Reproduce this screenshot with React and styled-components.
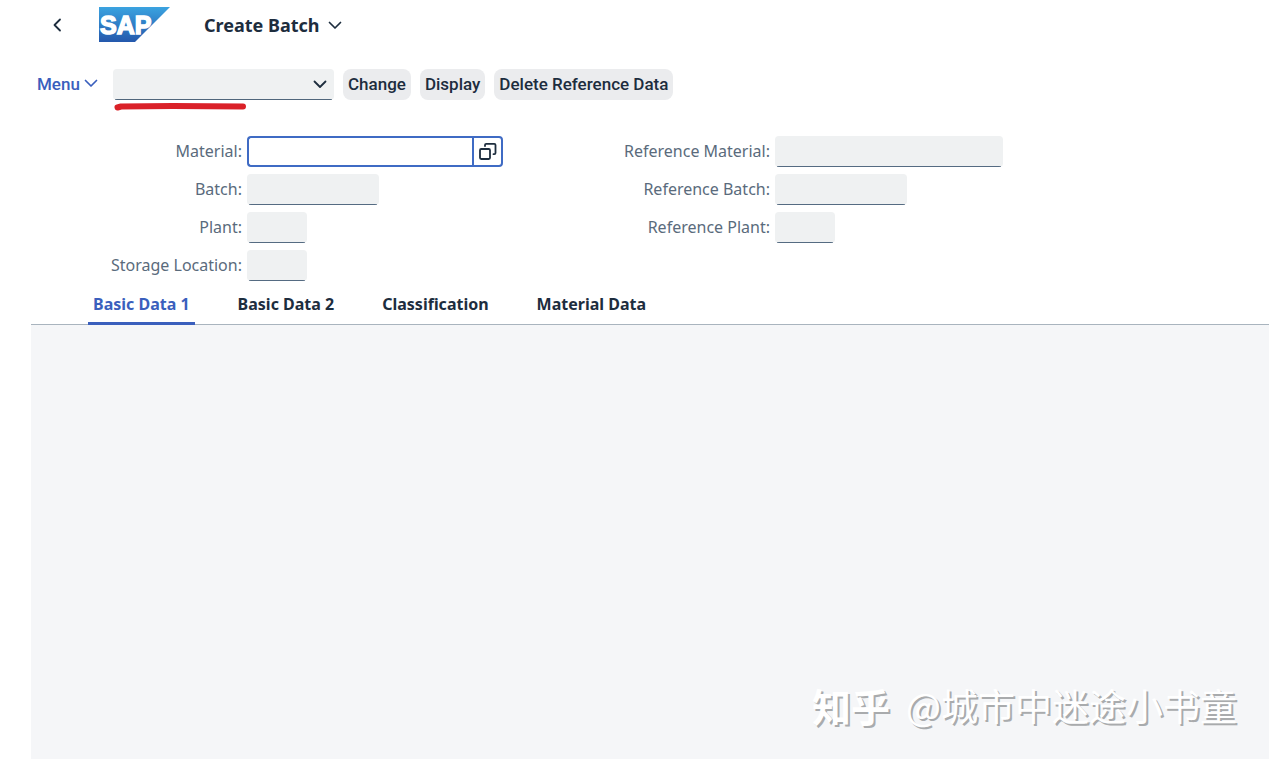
import React from "react";
import styled, { createGlobalStyle } from "styled-components";

const Global = createGlobalStyle`
  *, *::before, *::after { box-sizing: border-box; }
  html, body, #root { height: 100%; }
  body {
    margin: 0;
    background: #fff;
    color: #1d2d3e;
    font: 16px/20px "Noto Sans", "Liberation Sans", sans-serif;
  }
  button, input, select { font: inherit; color: inherit; margin: 0; }
`;

const Page = styled.div`
  display: flex;
  flex-direction: column;
  min-height: 100%;
  padding-left: 31px;
`;

const ShellBar = styled.header`
  display: flex;
  align-items: center;
  height: 50px;
  padding-left: 16px;
`;

const PlainButton = styled.button`
  display: flex;
  align-items: center;
  justify-content: center;
  gap: 4px;
  padding: 0;
  border: 0;
  background: none;
  cursor: pointer;
`;

const BackButton = styled(PlainButton)`
  width: 20px;
  height: 32px;
`;

const Logo = styled.svg`
  width: 72px;
  height: 36px;
  margin-left: 32px;
`;

const Title = styled.h1`
  margin: 0 0 0 33px;
  font-size: 18px;
  line-height: 24px;
  font-weight: 700;
`;

const TitleButton = styled(PlainButton)`
  gap: 8px;
`;

const Toolbar = styled.div`
  display: flex;
  align-items: center;
  gap: 9px;
  height: 31px;
  margin-top: 19px;
  padding-left: 6px;
  font: 500 17px/20px Roboto, "Liberation Sans", sans-serif;
`;

const MenuButton = styled(PlainButton)`
  width: 61px;
  height: 31px;
  margin-right: 6px;
  padding-bottom: 2px;
  justify-content: space-between;
  color: #3a5fbd;
`;

const CommandBox = styled.div`
  position: relative;
  width: 221px;
  height: 31px;
`;

const CommandSelect = styled.select`
  appearance: none;
  width: 100%;
  height: 100%;
  padding: 0 32px 0 8px;
  border: 0;
  border-radius: 4px;
  background: linear-gradient(#50667c, #50667c) center bottom / calc(100% - 4px) 1px no-repeat #eff1f2;
`;

const SelectArrow = styled.svg`
  position: absolute;
  right: 7px;
  top: 11px;
  pointer-events: none;
`;

const RedMark = styled.svg`
  position: absolute;
  left: 0;
  top: 32px;
  pointer-events: none;
`;

const ActionButton = styled(PlainButton)`
  height: 31px;
  padding: 0 5px 2px;
  border-radius: 8px;
  background: #ebecee;
`;

const Form = styled.form`
  display: grid;
  grid-template-columns: 528px 1fr;
  margin-top: 36px;
`;

const FieldColumn = styled.div`
  display: grid;
  grid-template-columns: 211px 1fr;
  grid-auto-rows: 31px;
  gap: 7px 5px;
  align-content: start;
`;

const Label = styled.label`
  padding-top: 5px;
  text-align: right;
  color: #5a6b7c;
`;

const Field = styled.input`
  width: ${(p) => p.$width}px;
  height: 31px;
  padding: 0 8px;
  border: 0;
  border-radius: 4px;
  background: linear-gradient(#556b82, #556b82) center bottom / calc(100% - 4px) 1px no-repeat #eff1f2;
`;

const HelpField = styled.div`
  display: flex;
`;

const FocusedField = styled.input`
  width: 225px;
  height: 31px;
  padding: 0 8px;
  border: 2px solid #3f6bc4;
  border-right-width: 0;
  border-radius: 4px 0 0 4px;
  background: #fff;
  outline: none;
`;

const HelpButton = styled(PlainButton)`
  width: 31px;
  height: 31px;
  border: 2px solid #3f6bc4;
  border-radius: 0 4px 4px 0;
`;

const Tabs = styled.nav`
  display: flex;
  gap: 38px;
  margin-top: 4px;
  padding-left: 57px;
  border-bottom: 1px solid #a9b4be;
`;

const Tab = styled.button`
  height: 40px;
  margin-bottom: -1px;
  padding: 0 5px;
  border: 0;
  border-bottom: 3px solid ${(p) => (p.$active ? "#3a5fbd" : "transparent")};
  background: none;
  color: ${(p) => (p.$active ? "#3a5fbd" : "#1d2d3e")};
  font-weight: 700;
  cursor: pointer;
`;

const Panel = styled.main`
  display: flex;
  flex: 1;
  align-items: flex-end;
  justify-content: flex-end;
  padding: 0 32px 27px 0;
  background: #f5f6f8;
`;

const Watermark = styled.div`
  display: flex;
  gap: 16px;
  color: #fff;
  font: 37px/54px "Noto Sans CJK SC", sans-serif;
  text-shadow: 2px 2px 0 #a9abad;
`;

const WatermarkBrand = styled.span`
  font-size: 39px;
  font-weight: 700;
`;

function Chevron() {
  return (
    <svg width="14" height="9" viewBox="0 0 14 9" fill="none" stroke="currentColor" strokeWidth="1.7" strokeLinecap="round" strokeLinejoin="round" aria-hidden="true">
      <path d="M1.5 1.5 7 7l5.5-5.5" />
    </svg>
  );
}

function SapLogo() {
  return (
    <Logo viewBox="0 0 72 36" role="img" aria-label="SAP">
      <defs>
        <linearGradient id="sapBlue" x1="0" y1="0" x2="0" y2="1">
          <stop offset="0" stopColor="#3ba3e0" />
          <stop offset="1" stopColor="#2458ac" />
        </linearGradient>
      </defs>
      <path d="M0 0h71L36 35H0z" fill="url(#sapBlue)" />
      <text x="1" y="27" fill="#fff" stroke="#fff" strokeWidth="1.5" fontFamily="Liberation Sans, sans-serif" fontWeight="700" fontSize="25">
        SAP
      </text>
    </Logo>
  );
}

function FieldRow({ id, label, width }) {
  return (
    <>
      <Label htmlFor={id}>{label}:</Label>
      <Field id={id} $width={width} />
    </>
  );
}

const tabs = ["Basic Data 1", "Basic Data 2", "Classification", "Material Data"];

export default function App() {
  const [active, setActive] = React.useState(0);
  return (
    <>
      <Global />
      <Page>
        <ShellBar>
          <BackButton aria-label="Back">
            <svg width="9" height="14" viewBox="0 0 9 14" fill="none" stroke="currentColor" strokeWidth="1.8" strokeLinecap="round" strokeLinejoin="round">
              <path d="M7 1.500 1.500 7 7 12.500" />
            </svg>
          </BackButton>
          <SapLogo />
          <Title>
            <TitleButton>
              Create Batch
              <Chevron />
            </TitleButton>
          </Title>
        </ShellBar>
        <Toolbar>
          <MenuButton>
            Menu
            <Chevron />
          </MenuButton>
          <CommandBox>
            <CommandSelect aria-label="Command">
              <option value="" />
            </CommandSelect>
            <SelectArrow width="14" height="9" viewBox="0 0 14 9" fill="none" stroke="currentColor" strokeWidth="1.8" strokeLinecap="round" strokeLinejoin="round">
              <path d="M1.5 1.5 7 7l5.5-5.5" />
            </SelectArrow>
            <RedMark width="136" height="12" viewBox="0 0 136 12" fill="none" stroke="#da2128" strokeWidth="6" strokeLinecap="round" strokeLinejoin="round">
              <path d="M4.5 6.5 8 5.5 60 5l70 .5" />
            </RedMark>
          </CommandBox>
          <ActionButton>Change</ActionButton>
          <ActionButton>Display</ActionButton>
          <ActionButton>Delete Reference Data</ActionButton>
        </Toolbar>
        <Form onSubmit={(e) => e.preventDefault()}>
          <FieldColumn>
            <Label htmlFor="material">Material:</Label>
            <HelpField>
              <FocusedField id="material" />
              <HelpButton type="button" aria-label="Value help">
                <svg width="20" height="20" viewBox="0 0 20 20" fill="none" stroke="currentColor" strokeWidth="1.8" strokeLinecap="round" strokeLinejoin="round">
                  <rect x="2" y="7" width="10" height="10" rx="1.2" />
                  <path d="M7 4V3a1.200 1.200 0 0 1 1.200-1.200H16.300a1.200 1.200 0 0 1 1.200 1.200V11a1.200 1.200 0 0 1-1.200 1.200h-.8" />
                </svg>
              </HelpButton>
            </HelpField>
            <FieldRow id="batch" label="Batch" width={132} />
            <FieldRow id="plant" label="Plant" width={60} />
            <FieldRow id="storage" label="Storage Location" width={60} />
          </FieldColumn>
          <FieldColumn>
            <FieldRow id="refMaterial" label="Reference Material" width={228} />
            <FieldRow id="refBatch" label="Reference Batch" width={132} />
            <FieldRow id="refPlant" label="Reference Plant" width={60} />
          </FieldColumn>
        </Form>
        <Tabs role="tablist">
          {tabs.map((name, i) => (
            <Tab key={name} role="tab" aria-selected={i === active} $active={i === active} onClick={() => setActive(i)}>
              {name}
            </Tab>
          ))}
        </Tabs>
        <Panel>
          <Watermark>
            <WatermarkBrand>知乎</WatermarkBrand>
            <span>@城市中迷途小书童</span>
          </Watermark>
        </Panel>
      </Page>
    </>
  );
}
